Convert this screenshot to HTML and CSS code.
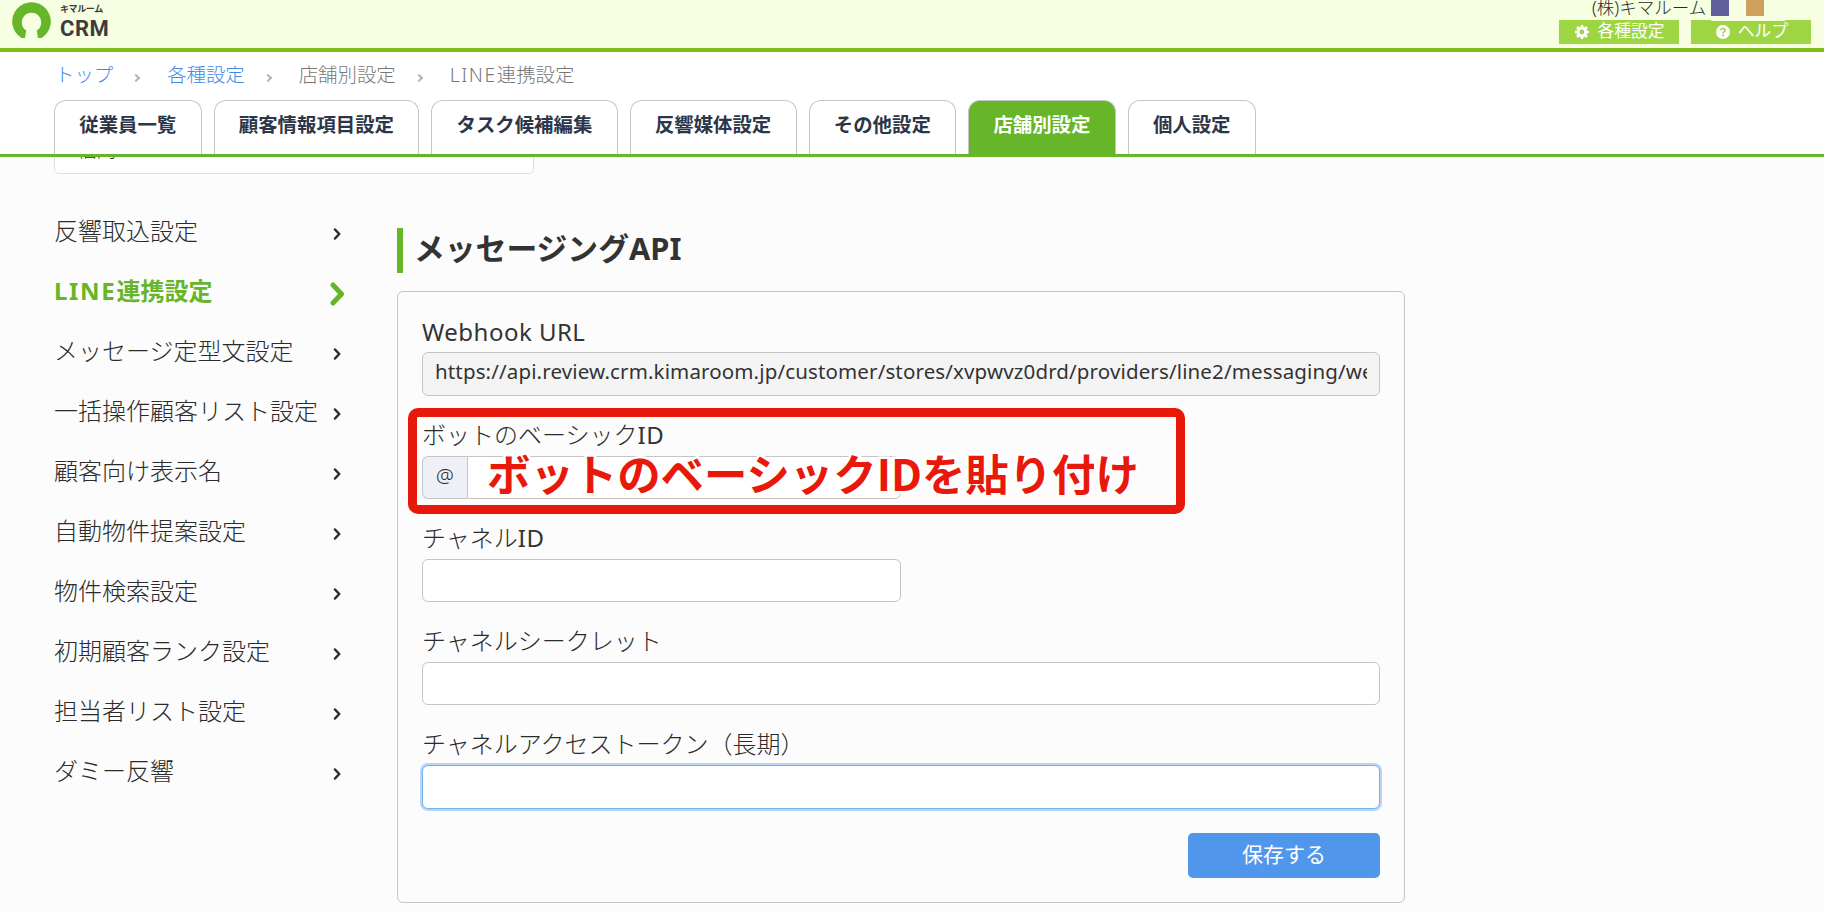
FILE: index.html
```html
<!DOCTYPE html>
<html lang="ja">

<head>
    <meta charset="UTF-8">
    <meta name="viewport" content="width=device-width, initial-scale=1.0">
    <title>LINE連携設定 | キマルームCRM</title>
    <link rel="stylesheet" href="styles.css">
</head>

<body>
    <svg width="0" height="0" class="defs">
        <symbol id="chevron" viewBox="0 0 14 24">
            <path d="M3 3l8.5 9L3 21" fill="none" stroke="currentColor" stroke-width="5" stroke-linecap="round" stroke-linejoin="round"/>
        </symbol>
    </svg>

    <div class="page-top">
        <header class="header">
            <a class="logo" href="#">
                <svg class="logo-mark" width="39" height="36" viewBox="0 0 39 36">
                    <path d="M13 36H9.5A19.3 19.3 0 1 1 29.5 36H26L24.8 28.5A9.7 9.7 0 1 0 14.2 28.5Z" fill="#67b529"/>
                </svg>
                <span class="logo-text">
                    <span class="logo-kana">キマルーム</span>
                    <span class="logo-name">CRM</span>
                </span>
            </a>
            <div class="header-right">
                <div class="user">
                    <span class="user-company">(株)キマルーム</span>
                    <span class="swatch purple"></span>
                    <span class="swatch orange"></span>
                </div>
                <div class="header-buttons">
                    <a class="header-btn" href="#">
                        <svg width="14" height="14" viewBox="0 0 14 14">
                            <circle cx="7" cy="7" r="3.9" fill="none" stroke="#fff" stroke-width="3"/>
                            <path d="M7 0v2.5M7 11.5v2.5M0 7h2.5M11.5 7h2.5M2 2l2 2M10 10l2 2M12 2l-2 2M4 10l-2 2" stroke="#fff" stroke-width="2.6"/>
                        </svg>
                        各種設定
                    </a>
                    <a class="header-btn help" href="#">
                        <svg width="14" height="14" viewBox="0 0 14 14">
                            <circle cx="7" cy="7" r="7" fill="#fff"/>
                            <path d="M4.9 5.3Q5 3.5 7 3.5T9.1 5.2Q9.1 6.2 8 6.7T7 8.4" fill="none" stroke="#9ed643" stroke-width="1.7"/>
                            <rect x="6.1" y="9.4" width="1.8" height="1.8" fill="#9ed643"/>
                        </svg>
                        ヘルプ
                    </a>
                </div>
            </div>
        </header>

        <ul class="breadcrumb">
            <li><a href="#">トップ</a></li>
            <li><a href="#">各種設定</a></li>
            <li>店舗別設定</li>
            <li><span class="latin">LINE</span>連携設定</li>
        </ul>

        <nav class="tabs">
            <a href="#">従業員一覧</a>
            <a href="#">顧客情報項目設定</a>
            <a href="#">タスク候補編集</a>
            <a href="#">反響媒体設定</a>
            <a href="#">その他設定</a>
            <a href="#" class="active">店舗別設定</a>
            <a href="#">個人設定</a>
        </nav>
    </div>

    <div class="store-select">福岡</div>

    <div class="content">
        <nav class="side-menu">
            <a href="#"><span>反響取込設定</span><svg><use href="#chevron"/></svg></a>
            <a href="#" class="active"><span><span class="latin">LINE</span>連携設定</span><svg><use href="#chevron"/></svg></a>
            <a href="#"><span>メッセージ定型文設定</span><svg><use href="#chevron"/></svg></a>
            <a href="#"><span>一括操作顧客リスト設定</span><svg><use href="#chevron"/></svg></a>
            <a href="#"><span>顧客向け表示名</span><svg><use href="#chevron"/></svg></a>
            <a href="#"><span>自動物件提案設定</span><svg><use href="#chevron"/></svg></a>
            <a href="#"><span>物件検索設定</span><svg><use href="#chevron"/></svg></a>
            <a href="#"><span>初期顧客ランク設定</span><svg><use href="#chevron"/></svg></a>
            <a href="#"><span>担当者リスト設定</span><svg><use href="#chevron"/></svg></a>
            <a href="#"><span>ダミー反響</span><svg><use href="#chevron"/></svg></a>
        </nav>

        <main class="main">
            <h2>メッセージングAPI</h2>

            <form class="panel">
                <div class="field">
                    <label for="webhook"><span class="latin">Webhook URL</span></label>
                    <input type="text" id="webhook" value="https://api.review.crm.kimaroom.jp/customer/stores/xvpwvz0drd/providers/line2/messaging/webhook" readonly>
                </div>
                <div class="field">
                    <label for="basic-id">ボットのベーシック<span class="latin">ID</span></label>
                    <div class="input-group">
                        <span class="addon">@</span>
                        <input type="text" id="basic-id">
                    </div>
                    <div class="callout">ボットのベーシックIDを貼り付け</div>
                </div>
                <div class="field">
                    <label for="channel-id">チャネル<span class="latin">ID</span></label>
                    <input type="text" id="channel-id" class="half">
                </div>
                <div class="field">
                    <label for="secret">チャネルシークレット</label>
                    <input type="text" id="secret">
                </div>
                <div class="field">
                    <label for="token">チャネルアクセストークン（長期）</label>
                    <input type="text" id="token" class="focused">
                </div>
                <button type="button" class="save">保存する</button>
            </form>
        </main>
    </div>
</body>

</html>
```

FILE: styles.css
```css
* {
    box-sizing: border-box;
}

body {
    margin: 0;
    height: 912px;
    overflow: hidden;
    background-color: #fcfcfc;
    color: #2b2b2b;
    font-family: "Noto Sans", "Noto Sans CJK JP", sans-serif;
    font-size: 24px;
    font-weight: 300;
}

a {
    color: inherit;
    text-decoration: none;
}

.defs {
    position: absolute;
}

.latin {
    color: #333;
    font-weight: 400;
    letter-spacing: 0.02em;
}

.page-top {
    position: relative;
    z-index: 1;
    height: 157px;
    background-color: #fff;
    border-bottom: 3px solid #67b529;
}

/* header */
.header {
    display: flex;
    justify-content: space-between;
    height: 52px;
    background-color: #f6ffe2;
    border-bottom: 4px solid #7fbe16;
}

.logo {
    display: flex;
    gap: 9px;
    padding: 2px 0 0 12px;
}

.logo-text {
    display: flex;
    flex-direction: column;
    color: #3c3c3c;
    font-weight: bold;
}

.logo-kana {
    font-size: 9px;
    line-height: 14px;
    letter-spacing: -0.4px;
}

.logo-name {
    font-family: Roboto, sans-serif;
    font-size: 22px;
    line-height: 26px;
    letter-spacing: 0.5px;
}

.header-right {
    padding-right: 13px;
}

.user {
    display: flex;
    height: 20px;
    padding-left: 33px;
}

.user-company {
    width: 119px;
    font-size: 17.5px;
    line-height: 14px;
    white-space: nowrap;
}

.swatch {
    width: 18px;
    height: 16px;
    margin-right: 17px;
}

.swatch.purple {
    background-color: #605f9b;
}

.swatch.orange {
    margin-right: 0;
    background-color: #cf9f5f;
}

.header-buttons {
    display: flex;
    gap: 12px;
}

.header-btn {
    position: relative;
    display: flex;
    justify-content: center;
    align-items: center;
    gap: 8px;
    width: 120px;
    height: 24px;
    padding: 0 0 2px 2px;
    background-color: #9ed643;
    color: #fff;
    font-size: 16.8px;
    font-weight: 400;
    line-height: 20px;
}

.header-btn svg {
    margin-top: 2px;
}

.help::before {
    content: "";
    position: absolute;
    top: 0;
    left: 20px;
    width: 74px;
    height: 1px;
    background-color: #f6ffe2;
}

/* breadcrumb */
.breadcrumb {
    display: flex;
    height: 48px;
    margin: 0;
    padding: 0 0 0 55px;
    list-style: none;
    color: #777;
    font-size: 19.4px;
    line-height: 45px;
}

.breadcrumb a {
    color: #3f88e8;
}

.breadcrumb li + li::before {
    content: "";
    display: inline-block;
    width: 6px;
    height: 6px;
    margin: 0 28px 1px 20px;
    border: solid #b5b5b5;
    border-width: 2.5px 2.5px 0 0;
    box-sizing: border-box;
    transform: rotate(45deg);
}

.breadcrumb .latin {
    color: inherit;
    font-weight: 300;
    letter-spacing: 0.08em;
}

/* tabs */
.tabs {
    display: flex;
    gap: 12px;
    padding-left: 54px;
}

.tabs a {
    height: 54px;
    padding: 0 24.3px;
    border: 1px solid #c5c5c5;
    border-bottom: none;
    border-radius: 12px 12px 0 0;
    color: #2d3648;
    font-size: 19.4px;
    font-weight: bold;
    line-height: 48px;
    white-space: nowrap;
}

.tabs .active {
    background-color: #67b529;
    color: #fff;
}

.store-select {
    width: 480px;
    height: 44px;
    margin: -27px 0 0 54px;
    padding-left: 22px;
    background-color: #fff;
    border: 1px solid #dcdde5;
    border-radius: 5px;
    font-size: 19.4px;
    line-height: 37px;
}

.content {
    display: flex;
    padding: 28px 0 0 54px;
}

/* side menu */
.side-menu {
    width: 343px;
}

.side-menu a {
    display: flex;
    align-items: center;
    justify-content: space-between;
    width: 287px;
    height: 60px;
    padding-bottom: 6px;
    white-space: nowrap;
}

.side-menu svg {
    width: 8px;
    height: 12px;
    margin-top: 10px;
}

.side-menu .active {
    width: 290px;
    color: #67b529;
    font-weight: bold;
}

.side-menu .active .latin {
    color: inherit;
    font-weight: bold;
    letter-spacing: 0.07em;
}

.side-menu .active svg {
    width: 14px;
    height: 24px;
}

/* main */
.main {
    width: 1008px;
    padding-top: 26px;
}

h2 {
    height: 45px;
    margin: 0 0 18px;
    padding-left: 11px;
    border-left: 6px solid #67b529;
    color: #333;
    font-size: 30.8px;
    line-height: 40px;
}

.panel {
    display: flex;
    flex-direction: column;
    height: 612px;
    padding: 24px;
    border: 1px solid #c5c5c5;
    border-radius: 6px;
}

.field {
    position: relative;
    height: 103px;
}

.field label {
    display: block;
    height: 37px;
    line-height: 32px;
}

.field:first-child label {
    height: 36px;
}

input {
    display: block;
    width: 100%;
    height: 43px;
    padding: 0 12px;
    border: 1px solid #c5c5c5;
    border-radius: 6px;
    background-color: #fff;
    color: #333;
    font: inherit;
    font-size: 20.5px;
}

input[readonly] {
    height: 44px;
    padding-bottom: 6px;
    background-color: #f4f4f4;
    font-weight: 400;
    letter-spacing: 0.14px;
}

input.half {
    width: 479px;
}

input.focused {
    height: 44px;
    border-color: #74b1ef;
    outline: none;
    box-shadow: 0 0 0 2px #b8d5f5;
}

.input-group {
    display: flex;
    width: 479px;
}

.addon {
    width: 45px;
    border: 1px solid #c5c5c5;
    border-right: none;
    border-radius: 6px 0 0 6px;
    background-color: #edf1f7;
    font-size: 20px;
    line-height: 37px;
    text-align: center;
}

.input-group input {
    flex: 1;
    width: auto;
    border-radius: 0 6px 6px 0;
}

/* red note over the basic ID field */
.callout {
    position: absolute;
    top: -11px;
    left: -14px;
    width: 777px;
    height: 106px;
    padding: 34px 0 0 70px;
    border: 9px solid #e8190b;
    border-radius: 10px;
    color: #e8190b;
    font-family: "Noto Sans CJK JP", sans-serif;
    font-size: 43.4px;
    font-weight: bold;
    line-height: 43px;
    white-space: nowrap;
    -webkit-text-stroke: 5px #fff;
    paint-order: stroke fill;
}

.save {
    align-self: flex-end;
    width: 192px;
    height: 45px;
    margin-top: 2px;
    padding: 0 0 6px;
    border: none;
    border-radius: 5px;
    background-color: #5097ec;
    color: #fff;
    font: inherit;
    font-size: 21px;
    font-weight: 400;
}
```
